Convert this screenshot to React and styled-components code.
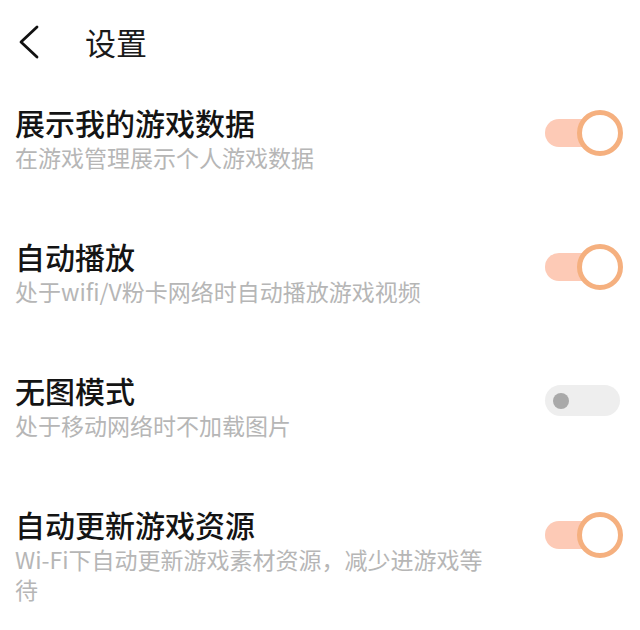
import React, { useState } from "react";
import styled, { createGlobalStyle } from "styled-components";

const GlobalStyle = createGlobalStyle`
  html, body {
    margin: 0;
    padding: 0;
    background: #ffffff;
  }
  body {
    font-family: "Noto Sans CJK SC", "Noto Sans", sans-serif;
    -webkit-font-smoothing: antialiased;
  }
`;

const Page = styled.div`
  width: 640px;
  min-height: 630px;
  background: #ffffff;
`;

const Header = styled.header`
  height: 84px;
  display: flex;
  align-items: center;
  padding-left: 16px;
  gap: 43px;
`;

const BackButton = styled.button`
  border: none;
  background: none;
  padding: 0;
  width: 26px;
  height: 34px;
  display: flex;
  align-items: center;
  justify-content: center;
  cursor: pointer;
`;

const Title = styled.h1`
  margin: 0;
  font-size: 31px;
  font-weight: 400;
  color: #1a1a1a;
  line-height: 40px;
`;

const List = styled.div`
  display: flex;
  flex-direction: column;
  gap: 64px;
  padding-top: 18px;
`;

const Row = styled.div`
  display: flex;
  align-items: flex-start;
  justify-content: space-between;
  padding: 0 17px 0 15px;
`;

const Texts = styled.div`
  display: flex;
  flex-direction: column;
  max-width: 490px;
`;

const ItemTitle = styled.div`
  font-size: 30px;
  line-height: 40px;
  font-weight: 500;
  color: #141414;
`;

const ItemDesc = styled.div`
  font-size: 23px;
  line-height: 30px;
  color: #b6b6b6;
`;

const Track = styled.button`
  position: relative;
  flex-shrink: 0;
  margin-top: 8px;
  width: 78px;
  height: 46px;
  padding: 0;
  border: none;
  background: none;
  cursor: pointer;

  &::before {
    content: "";
    position: absolute;
    left: 0;
    right: ${(p) => (p.$on ? "6px" : "3px")};
    top: ${(p) => (p.$on ? "9px" : "7px")};
    bottom: ${(p) => (p.$on ? "9px" : "8px")};
    border-radius: 16px;
    background: ${(p) => (p.$on ? "#fdcab6" : "#eeeeee")};
  }
`;

const Knob = styled.span`
  position: absolute;
  box-sizing: border-box;
  ${(p) =>
    p.$on
      ? `
    right: 0;
    top: 0;
    width: 46px;
    height: 46px;
    border: 5px solid #f5b07f;
    background: #ffffff;
  `
      : `
    left: 8px;
    top: 15px;
    width: 16px;
    height: 16px;
    background: #a9a9a9;
  `}
  border-radius: 50%;
`;

const Toggle = ({ on, onClick }) => (
  <Track $on={on} onClick={onClick}>
    <Knob $on={on} />
  </Track>
);

const initial = [
  { title: "展示我的游戏数据", desc: "在游戏管理展示个人游戏数据", on: true },
  { title: "自动播放", desc: "处于wifi/V粉卡网络时自动播放游戏视频", on: true },
  { title: "无图模式", desc: "处于移动网络时不加载图片", on: false },
  {
    title: "自动更新游戏资源",
    desc: "Wi-Fi下自动更新游戏素材资源，减少进游戏等待",
    on: true,
  },
];

export default function App() {
  const [items, setItems] = useState(initial);

  const flip = (index) =>
    setItems((list) =>
      list.map((item, i) => (i === index ? { ...item, on: !item.on } : item))
    );

  return (
    <Page>
      <GlobalStyle />
      <Header>
        <BackButton aria-label="返回">
          <svg width="26" height="34" viewBox="0 0 26 34">
            <polyline
              points="21,2 5,17 21,32"
              fill="none"
              stroke="#111"
              strokeWidth="2.8"
              strokeLinecap="round"
              strokeLinejoin="round"
            />
          </svg>
        </BackButton>
        <Title>设置</Title>
      </Header>
      <List>
        {items.map((item, index) => (
          <Row key={index}>
            <Texts>
              <ItemTitle>{item.title}</ItemTitle>
              <ItemDesc>{item.desc}</ItemDesc>
            </Texts>
            <Toggle on={item.on} onClick={() => flip(index)} />
          </Row>
        ))}
      </List>
    </Page>
  );
}
